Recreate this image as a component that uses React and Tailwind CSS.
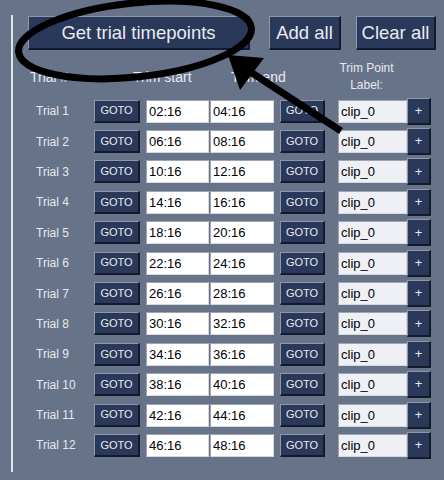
import React from "react";

const pad = (n) => String(n).padStart(2, "0");

const trials = Array.from({ length: 12 }, (_, i) => ({
	name: `Trial ${i + 1}`,
	start: `${pad(i * 4 + 2)}:16`,
	end: `${pad(i * 4 + 4)}:16`,
}));

const btn =
	"bg-[#2a385a] text-[#e8ebf1] border-t border-l border-t-[#8d98ad] border-l-[#8d98ad] border-b-2 border-r-2 border-b-[#121a2b] border-r-[#121a2b] flex items-center justify-center";

const field =
	"h-[23px] pl-[2px] text-[13px] text-black border border-[#9ea5b1] border-b-[#d5d9e0] border-r-[#d5d9e0] outline-none font-['Liberation_Sans',Arial,sans-serif]";

const TrialRow = ({ t }) => (
	<div className="h-[30.4px] flex items-center">
		<div className="w-[81px] pl-[23px] text-[12px] text-[#e6e9ef]">{t.name}</div>
		<button className={`${btn} w-[46px] h-[23px] text-[11px]`}>GOTO</button>
		<input readOnly value={t.start} className={`${field} ml-[6px] w-[63px] bg-white`} />
		<input readOnly value={t.end} className={`${field} ml-[1px] w-[64px] bg-white`} />
		<button className={`${btn} ml-[6px] w-[45px] h-[23px] text-[11px]`}>GOTO</button>
		<input readOnly value="clip_0" className={`${field} ml-[13px] w-[69px] bg-[#eef0f5]`} />
		<button className={`${btn} w-[24px] h-[27px] text-[13px]`}>+</button>
	</div>
);

export default function App() {
	return (
		<div className="w-[444px] h-[480px] bg-[#667389] relative overflow-hidden font-['Liberation_Sans',Arial,sans-serif]">
			<div className="ml-[11px] mt-[15px] h-[457px] border-l-2 border-[#dfe3ea]">
				<div className="flex pt-[1px] pl-[15px]">
					<button className={`${btn} w-[222px] h-[34px] text-[18.5px]`}>Get trial timepoints</button>
					<button className={`${btn} ml-[19px] w-[72px] h-[34px] text-[18.5px]`}>Add all</button>
					<button className={`${btn} ml-[15px] w-[80px] h-[34px] text-[18.5px]`}>Clear all</button>
				</div>

				<div className="h-[46px] pt-[8px] flex items-center text-[#e6e9ef]">
					<div className="w-[120px] pl-[17px] text-[14px]">Trial #</div>
					<div className="w-[98px] text-[14px]">Trim start</div>
					<div className="w-[107px] text-[14px]">Trim end</div>
					<div className="w-[57px] text-[12px] leading-[17px] text-center">
						Trim Point
						<br />
						Label:
					</div>
				</div>

				<div className="flex flex-col">
					{trials.map((t) => (
						<TrialRow key={t.name} t={t} />
					))}
				</div>
			</div>

			{/* annotation drawn over the screenshot */}
			<svg className="absolute left-0 top-0 pointer-events-none" width="444" height="480">
				<ellipse cx="135" cy="40" rx="117" ry="37" transform="rotate(-6 135 40)" fill="none" stroke="#000" strokeWidth="7" />
				<line x1="341" y1="131" x2="252" y2="73" stroke="#000" strokeWidth="7" />
				<polygon points="228,55 240,90 264,58" fill="#000" />
			</svg>
		</div>
	);
}
